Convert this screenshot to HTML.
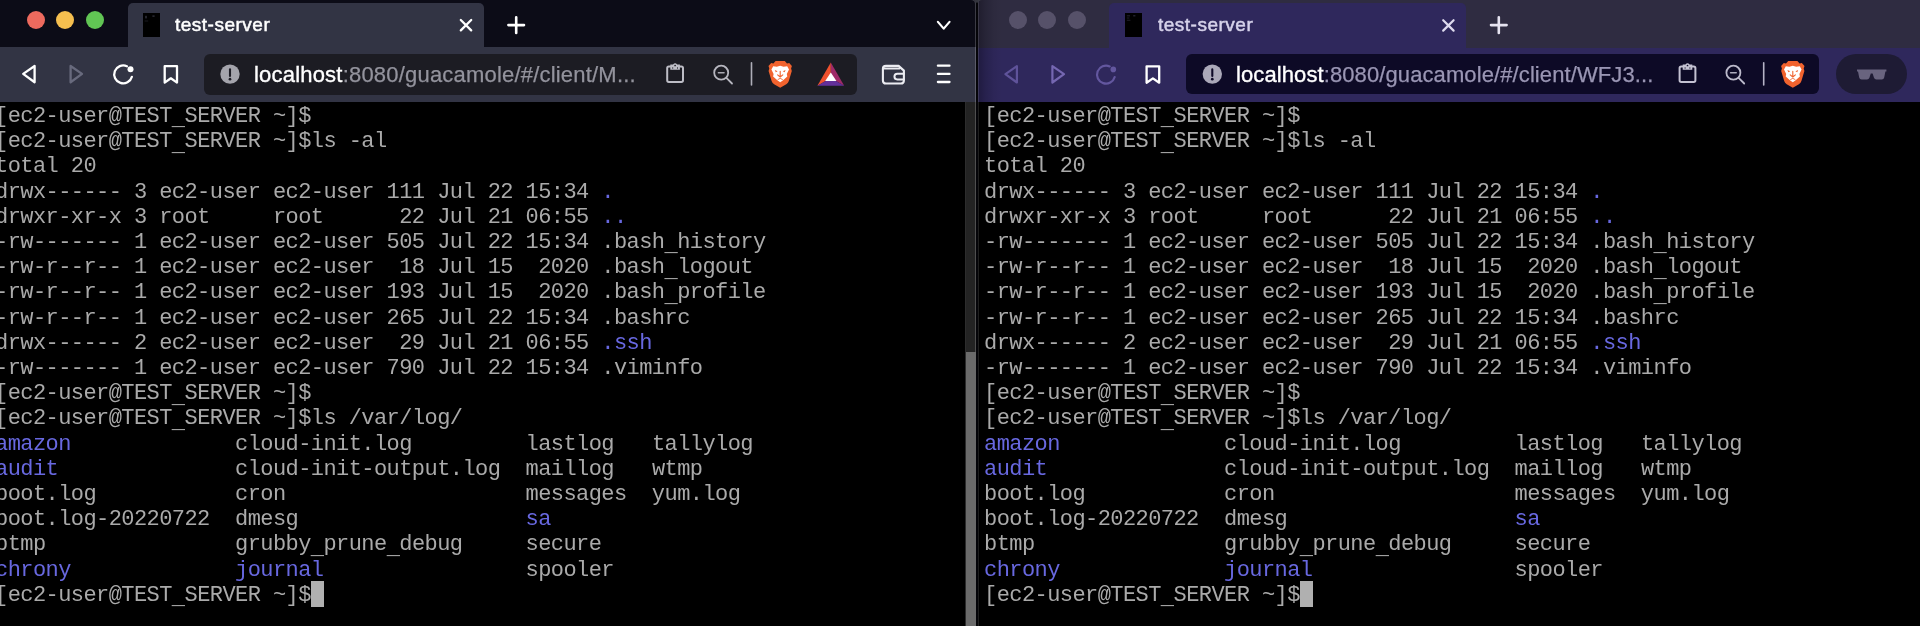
<!DOCTYPE html>
<html lang="en"><head><meta charset="utf-8"><title>test-server</title>
<style>
*{margin:0;padding:0;box-sizing:border-box}
html,body{width:1920px;height:626px;overflow:hidden;background:#000}
body{position:relative;font-family:"Liberation Sans",sans-serif}
.win{position:absolute;top:0;height:626px;overflow:hidden;background:#000}
#wl{left:0;width:976.3px}
#wr{left:978px;width:942px}
#sep{position:absolute;left:976.3px;top:0;width:1.9px;height:626px;background:#050509}
#lb{position:absolute;left:974.8px;top:0;width:1.5px;height:626px;background:rgba(255,255,255,0.2)}
#rb{position:absolute;left:978px;top:0;width:1px;height:626px;background:rgba(255,255,255,0.12)}
#wr .edge{position:absolute;left:0;top:0;width:24px;height:102px;background:linear-gradient(to right,rgba(0,0,8,0.34),rgba(0,0,8,0.18) 30%,rgba(0,0,8,0.06) 65%,rgba(0,0,8,0))}
.abs{position:absolute}
.term,.ttl,.utx{will-change:transform}
/* ---------- left chrome ---------- */
#wl .strip{position:absolute;left:0;top:0;width:100%;height:47px;background:#0c0c17}
#wl .tool{position:absolute;left:0;top:47px;width:100%;height:54.6px;background:#323444}
#wl .tab{position:absolute;left:128px;top:3px;width:355.8px;height:45px;background:#323444;border-radius:5px 5px 0 0}
#wl .url{position:absolute;left:203.7px;top:54px;width:653.3px;height:40.5px;background:#1c1c23;border-radius:6px}
.tl{position:absolute;top:11px;width:18px;height:18px;border-radius:50%}
.fav{position:absolute;top:13px;width:17px;height:23px;background:#000}
.ttl{position:absolute;top:13px;height:24px;line-height:24px;font-size:19px;letter-spacing:0.5px;-webkit-text-stroke:0.5px currentColor;white-space:nowrap}
#wl .ttl{left:175.4px;color:#fff}
.utx{position:absolute;top:61.5px;height:26px;line-height:26px;font-size:22px;letter-spacing:0.1px;white-space:nowrap;-webkit-text-stroke:0.25px currentColor}
#wl .utx{left:254px;color:#93939d;letter-spacing:0.2px}
#wl .utx b{color:#fff;font-weight:normal;-webkit-text-stroke:0.35px #fff}
/* ---------- right chrome ---------- */
#wr .strip{position:absolute;left:0;top:0;width:100%;height:48px;background:#2f2c41}
#wr .tool{position:absolute;left:0;top:48px;width:100%;height:53.8px;background:#2f285c}
#wr .tab{position:absolute;left:131.2px;top:3px;width:356.4px;height:46px;background:#2f285c;border-radius:5px 5px 0 0}
#wr .url{position:absolute;left:207.5px;top:53.5px;width:633px;height:40.8px;background:#0d0a26;border-radius:6px}
#wr .ttl{left:179.8px;color:#d6d2ea}
#wr .utx{left:258.4px;color:#9a96b4}
#wr .utx b{color:#fff;font-weight:normal;-webkit-text-stroke:0.35px #fff}
#wr .pill{position:absolute;left:857.8px;top:54px;width:71.2px;height:40.2px;border-radius:20.1px;background:#1e1b34}
/* ---------- terminal ---------- */
.term{position:absolute;top:104.30px;font-family:"Liberation Mono",monospace;font-size:22.00px;color:#aaaaaa;white-space:pre}
.ln{position:absolute;left:0;height:25.20px;line-height:25.20px;white-space:pre}
.ln b{font-weight:normal;color:#6868e0}
.ln u{text-decoration:none;position:relative;top:3.4px}
.cur{display:inline-block;position:relative;width:0;height:0;vertical-align:top}
.cur::after{content:'';position:absolute;left:0;top:-1.5px;width:12.6px;height:25.3px;background:#b0b0b0}
/* scrollbar */
#sbt{position:absolute;left:964.8px;top:101.6px;width:11.5px;height:525px;background:#232323;border-left:0.8px solid #2c2c2c}
#sbh{position:absolute;left:965.6px;top:352px;width:10.4px;height:274px;background:#6b6b6b}
svg{position:absolute;overflow:visible}

</style></head>
<body>
<div id="wl" class="win">
  <div class="strip"></div>
  <div class="tool"></div>
  <div class="tab"></div>
  <div class="tl" style="left:26.8px;background:#ed6a5e"></div>
  <div class="tl" style="left:56px;background:#f5bf4f"></div>
  <div class="tl" style="left:86px;background:#61c554"></div>
  <div class="fav" style="left:143.1px;top:13.2px;width:16.8px;height:23.6px"></div>
  <div class="ttl">test-server</div>
  <div class="url"></div>
  <div class="utx"><b>localhost</b>:8080/guacamole/#/client/M...</div>
  <div class="term" style="left:-4.53px;letter-spacing:-0.570px"><div class="ln" style="top:0.00px">[ec2-user@TEST<u>_</u>SERVER ~]$</div><div class="ln" style="top:25.20px">[ec2-user@TEST<u>_</u>SERVER ~]$ls -al</div><div class="ln" style="top:50.40px">total 20</div><div class="ln" style="top:75.60px">drwx------ 3 ec2-user ec2-user 111 Jul 22 15:34 <b>.</b></div><div class="ln" style="top:100.80px">drwxr-xr-x 3 root     root      22 Jul 21 06:55 <b>..</b></div><div class="ln" style="top:126.00px">-rw------- 1 ec2-user ec2-user 505 Jul 22 15:34 .bash<u>_</u>history</div><div class="ln" style="top:151.20px">-rw-r--r-- 1 ec2-user ec2-user  18 Jul 15  2020 .bash<u>_</u>logout</div><div class="ln" style="top:176.40px">-rw-r--r-- 1 ec2-user ec2-user 193 Jul 15  2020 .bash<u>_</u>profile</div><div class="ln" style="top:201.60px">-rw-r--r-- 1 ec2-user ec2-user 265 Jul 22 15:34 .bashrc</div><div class="ln" style="top:226.80px">drwx------ 2 ec2-user ec2-user  29 Jul 21 06:55 <b>.ssh</b></div><div class="ln" style="top:252.00px">-rw------- 1 ec2-user ec2-user 790 Jul 22 15:34 .viminfo</div><div class="ln" style="top:277.20px">[ec2-user@TEST<u>_</u>SERVER ~]$</div><div class="ln" style="top:302.40px">[ec2-user@TEST<u>_</u>SERVER ~]$ls /var/log/</div><div class="ln" style="top:327.60px"><b>amazon</b>             cloud-init.log         lastlog   tallylog</div><div class="ln" style="top:352.80px"><b>audit</b>              cloud-init-output.log  maillog   wtmp</div><div class="ln" style="top:378.00px">boot.log           cron                   messages  yum.log</div><div class="ln" style="top:403.20px">boot.log-20220722  dmesg                  <b>sa</b></div><div class="ln" style="top:428.40px">btmp               grubby<u>_</u>prune<u>_</u>debug     secure</div><div class="ln" style="top:453.60px"><b>chrony</b>             <b>journal</b>                spooler</div><div class="ln" style="top:478.80px">[ec2-user@TEST<u>_</u>SERVER ~]$<i class="cur" style="margin-left:0.28px"></i></div></div>
</div>
<div id="sbt"></div>
<div id="lb"></div>
<div id="sep"></div>
<div id="sbh"></div>
<div id="wr" class="win">
  <div class="strip"></div>
  <div class="tool"></div>
  <div class="edge"></div>
  <div class="tab"></div>
  <div class="tl" style="left:30.9px;top:10.8px;background:#565169"></div>
  <div class="tl" style="left:60.3px;top:10.8px;background:#565169"></div>
  <div class="tl" style="left:90.3px;top:10.8px;background:#565169"></div>
  <div class="fav" style="left:146.9px;top:13px;width:17.2px;height:23.7px"></div>
  <div class="ttl">test-server</div>
  <div class="url"></div>
  <div class="utx"><b>localhost</b>:8080/guacamole/#/client/WFJ3...</div>
  <div class="pill"></div>
  <div class="term" style="left:5.97px;letter-spacing:-0.570px"><div class="ln" style="top:0.00px">[ec2-user@TEST<u>_</u>SERVER ~]$</div><div class="ln" style="top:25.20px">[ec2-user@TEST<u>_</u>SERVER ~]$ls -al</div><div class="ln" style="top:50.40px">total 20</div><div class="ln" style="top:75.60px">drwx------ 3 ec2-user ec2-user 111 Jul 22 15:34 <b>.</b></div><div class="ln" style="top:100.80px">drwxr-xr-x 3 root     root      22 Jul 21 06:55 <b>..</b></div><div class="ln" style="top:126.00px">-rw------- 1 ec2-user ec2-user 505 Jul 22 15:34 .bash<u>_</u>history</div><div class="ln" style="top:151.20px">-rw-r--r-- 1 ec2-user ec2-user  18 Jul 15  2020 .bash<u>_</u>logout</div><div class="ln" style="top:176.40px">-rw-r--r-- 1 ec2-user ec2-user 193 Jul 15  2020 .bash<u>_</u>profile</div><div class="ln" style="top:201.60px">-rw-r--r-- 1 ec2-user ec2-user 265 Jul 22 15:34 .bashrc</div><div class="ln" style="top:226.80px">drwx------ 2 ec2-user ec2-user  29 Jul 21 06:55 <b>.ssh</b></div><div class="ln" style="top:252.00px">-rw------- 1 ec2-user ec2-user 790 Jul 22 15:34 .viminfo</div><div class="ln" style="top:277.20px">[ec2-user@TEST<u>_</u>SERVER ~]$</div><div class="ln" style="top:302.40px">[ec2-user@TEST<u>_</u>SERVER ~]$ls /var/log/</div><div class="ln" style="top:327.60px"><b>amazon</b>             cloud-init.log         lastlog   tallylog</div><div class="ln" style="top:352.80px"><b>audit</b>              cloud-init-output.log  maillog   wtmp</div><div class="ln" style="top:378.00px">boot.log           cron                   messages  yum.log</div><div class="ln" style="top:403.20px">boot.log-20220722  dmesg                  <b>sa</b></div><div class="ln" style="top:428.40px">btmp               grubby<u>_</u>prune<u>_</u>debug     secure</div><div class="ln" style="top:453.60px"><b>chrony</b>             <b>journal</b>                spooler</div><div class="ln" style="top:478.80px">[ec2-user@TEST<u>_</u>SERVER ~]$<i class="cur" style="margin-left:0.28px"></i></div></div>
</div>

<div id="rb"></div>
<svg id="ico" width="1920" height="626" viewBox="0 0 1920 626" style="left:0;top:0" fill="none" stroke-linecap="round" stroke-linejoin="round">
<!-- ===== LEFT WINDOW ===== -->
<g stroke="#fff" stroke-width="2.3">
  <path d="M23.2 73.9 L34.6 66 L34.6 82.3 Z"/>
  <path d="M70.6 66 L82 73.9 L70.6 82.3 Z" stroke="#686a7d"/>
  <path d="M126.9 66.2 A9 9 0 1 0 131.9 76.8"/>
  <circle cx="130.5" cy="69.2" r="3" fill="#fff" stroke="none"/>
  <path d="M164.7 66.2 H177 V82.6 L170.85 78.3 L164.7 82.6 Z"/>
  <path d="M460.8 20 L471.2 30.4 M471.2 20 L460.8 30.4"/>
  <path d="M508.4 25.1 H524 M516.2 17.3 V32.9" stroke-width="2.6"/>
  <path d="M937.9 21.9 L943.7 28.6 L949.5 21.9" stroke-width="2.2"/>
  <path d="M937.9 65.7 H949.5 M937.9 73.9 H949.5 M937.9 82 H949.5"/>
</g>
<!-- info -->
<circle cx="230" cy="74.1" r="9.7" fill="#a4a4ac"/>
<path d="M230 69.4 V76" stroke="#1d1d26" stroke-width="2.1"/>
<circle cx="230" cy="79.2" r="1.35" fill="#1d1d26"/>
<!-- clipboard -->
<g stroke="#bdbdc6" stroke-width="2">
  <rect x="667.2" y="66.5" width="15.8" height="15.4" rx="1.6"/>
  <path d="M670.3 69.8 V64.6 H673 Q675.1 61.8 677.2 64.6 H679.9 V69.8 Z" stroke="none" fill="#bdbdc6"/>
  <circle cx="675.1" cy="65.5" r="0.85" fill="#1c1c23" stroke="none"/>
  <path d="M672.7 67.6 V68.4 M677.5 67.6 V68.4" stroke="#34343c" stroke-width="0.9"/>
</g>
<!-- zoom out -->
<g stroke="#b6b6bf" stroke-width="1.8">
  <circle cx="721.2" cy="72.7" r="7"/>
  <path d="M718.4 72.7 H724" stroke-width="1.6" stroke="#a9a9b2"/>
  <path d="M726.4 77.9 L732 83.5"/>
</g>
<path d="M751.5 62.8 V85" stroke="#aeaeb8" stroke-width="1.6"/>
<!-- brave lion -->
<g transform="translate(768.2 61.1) scale(1 0.968)">
  <path d="M12 0 L16.6 0 L18.8 2.4 L21 2 L23.7 5.1 L22.9 7.6 L23.6 10.2 L20.6 20.6 Q20.1 22.6 18.1 24 L12 27.6 L5.9 24 Q3.9 22.6 3.4 20.6 L0.4 10.2 L1.1 7.6 L0.3 5.1 L3 2 L5.2 2.4 L7.4 0 Z" fill="#f1632e" stroke="none"/>
  <path d="M5 5.2 L8.6 5.9 L12 4.9 L15.4 5.9 L19 5.2 L20.8 8.8 L18.6 13.4 L19.1 15.8 L14.6 20 L12 21.8 L9.4 20 L4.9 15.8 L5.4 13.4 L3.2 8.8 Z" fill="#fff" stroke="none"/>
  <path d="M12 10.4 V15.6 M9.4 14.2 L12 16.4 L14.6 14.2" stroke="#f1632e" stroke-width="1.1"/>
  <path d="M6.6 9.2 L9.4 10.4 L7.6 11.4 Z M17.4 9.2 L14.6 10.4 L16.4 11.4 Z" fill="#f1632e" stroke="none"/>
  <path d="M9.8 19 L12 17.8 L14.2 19" stroke="#f1632e" stroke-width="0.9"/>
</g>
<!-- BAT -->
<g stroke="none">
  <path d="M830.8 62.4 L817.4 85.8 L830.8 78 Z" fill="#f0512e"/>
  <path d="M830.8 62.4 L844.2 85.8 L830.8 78 Z" fill="#9e2a68"/>
  <path d="M817.4 85.8 L844.2 85.8 L830.8 78 Z" fill="#63309a"/>
  <path d="M830.8 72.6 L836.4 81 L825.2 81 Z" fill="#fff"/>
</g>
<!-- wallet -->
<g stroke="#ececf2" stroke-width="2.1">
  <path d="M886 65.9 H898.6 L903.9 70.6 V80.4 Q903.9 83.5 900.8 83.5 H886 Q882.9 83.5 882.9 80.4 V69 Q882.9 65.9 886 65.9 Z"/>
  <path d="M883.6 68.5 H899.6" stroke-width="1.9"/>
  <path d="M903.6 73.7 H897.3 A2.85 2.85 0 0 0 897.3 79.4 H903.6" stroke-width="2"/>
</g>
<g fill="#2e2e38" stroke="none"><rect x="145.2" y="15.8" width="1.6" height="2.6"/><rect x="152.4" y="15.4" width="2.2" height="1.4"/><rect x="144.6" y="20.6" width="3.6" height="0.8" fill="#22222a"/></g>
<g fill="#2a2838" stroke="none"><rect x="1126.8" y="15.4" width="3.2" height="0.9"/><rect x="1133.2" y="15.2" width="2.2" height="1.2"/><rect x="1126.8" y="17.6" width="2.6" height="0.8"/><rect x="1126.8" y="19.8" width="3.6" height="0.8"/></g>
<g fill="#3c3d47" stroke="none"><path d="M970.8 0 H974.8 V4 A4 4 0 0 0 970.8 0 Z"/><path d="M982.2 0 H978.2 V4 A4 4 0 0 1 982.2 0 Z"/><rect x="974.8" y="0" width="3.4" height="2.6" fill="#34353e"/></g>
<!-- ===== RIGHT WINDOW ===== -->
<g stroke="#5f539a" stroke-width="2.2">
  <path d="M1005.4 74.1 L1016.9 66.2 L1016.9 82.5 Z"/>
  <path d="M1052.4 66.2 L1064 74.1 L1052.4 82.5 Z" stroke="#7567b1"/>
  <path d="M1109.7 66.4 A9 9 0 1 0 1114.7 77" stroke="#63579f"/>
  <circle cx="1113.3" cy="69.4" r="2.8" fill="#63579f" stroke="none"/>
</g>
<g stroke="#fff" stroke-width="2.3">
  <path d="M1146.6 66.3 H1159.2 V82.7 L1152.9 78.4 L1146.6 82.7 Z"/>
</g>
<path d="M1443.2 20.2 L1453.6 30.6 M1453.6 20.2 L1443.2 30.6" stroke="#dedaee" stroke-width="2.2"/>
<path d="M1491 25.1 H1506.6 M1498.8 17.3 V32.9" stroke="#e6e3f0" stroke-width="2.6"/>
<circle cx="1212.3" cy="74.1" r="9.7" fill="#aba9b9"/>
<path d="M1212.3 69.4 V76" stroke="#0e0a28" stroke-width="2.1"/>
<circle cx="1212.3" cy="79.2" r="1.35" fill="#0e0a28"/>
<g stroke="#c4c2d2" stroke-width="2">
  <rect x="1679.6" y="66.5" width="15.8" height="15.4" rx="1.6"/>
  <path d="M1682.7 69.8 V64.6 H1685.4 Q1687.5 61.8 1689.6 64.6 H1692.3 V69.8 Z" stroke="none" fill="#c4c2d2"/>
  <circle cx="1687.5" cy="65.5" r="0.85" fill="#0d0a26" stroke="none"/>
  <path d="M1685.1 67.6 V68.4 M1689.9 67.6 V68.4" stroke="#2a2840" stroke-width="0.9"/>
</g>
<g stroke="#bcbacb" stroke-width="1.8">
  <circle cx="1733.4" cy="72.7" r="7"/>
  <path d="M1730.6 72.7 H1736.2" stroke-width="1.6" stroke="#aeacbe"/>
  <path d="M1738.6 77.9 L1744.2 83.5"/>
</g>
<path d="M1763.7 62.8 V85" stroke="#b5b3c6" stroke-width="1.6"/>
<g transform="translate(1780.8 61.1) scale(1 0.968)">
  <path d="M12 0 L16.6 0 L18.8 2.4 L21 2 L23.7 5.1 L22.9 7.6 L23.6 10.2 L20.6 20.6 Q20.1 22.6 18.1 24 L12 27.6 L5.9 24 Q3.9 22.6 3.4 20.6 L0.4 10.2 L1.1 7.6 L0.3 5.1 L3 2 L5.2 2.4 L7.4 0 Z" fill="#f1632e" stroke="none"/>
  <path d="M5 5.2 L8.6 5.9 L12 4.9 L15.4 5.9 L19 5.2 L20.8 8.8 L18.6 13.4 L19.1 15.8 L14.6 20 L12 21.8 L9.4 20 L4.9 15.8 L5.4 13.4 L3.2 8.8 Z" fill="#fff" stroke="none"/>
  <path d="M12 10.4 V15.6 M9.4 14.2 L12 16.4 L14.6 14.2" stroke="#f1632e" stroke-width="1.1"/>
  <path d="M6.6 9.2 L9.4 10.4 L7.6 11.4 Z M17.4 9.2 L14.6 10.4 L16.4 11.4 Z" fill="#f1632e" stroke="none"/>
  <path d="M9.8 19 L12 17.8 L14.2 19" stroke="#f1632e" stroke-width="0.9"/>
</g>
<!-- sunglasses -->
<g fill="#69647f" stroke="none">
  <path d="M1857 69.6 H1886.4 V71.4 H1885.4 L1884.2 77.6 Q1883.8 79.6 1881.8 79.6 H1876.4 Q1874.6 79.6 1874 77.8 L1872.6 73.4 H1870.8 L1869.4 77.8 Q1868.8 79.6 1867 79.6 H1861.6 Q1859.6 79.6 1859.2 77.6 L1858 71.4 H1857 Z"/>
</g>
</svg>


</body></html>
